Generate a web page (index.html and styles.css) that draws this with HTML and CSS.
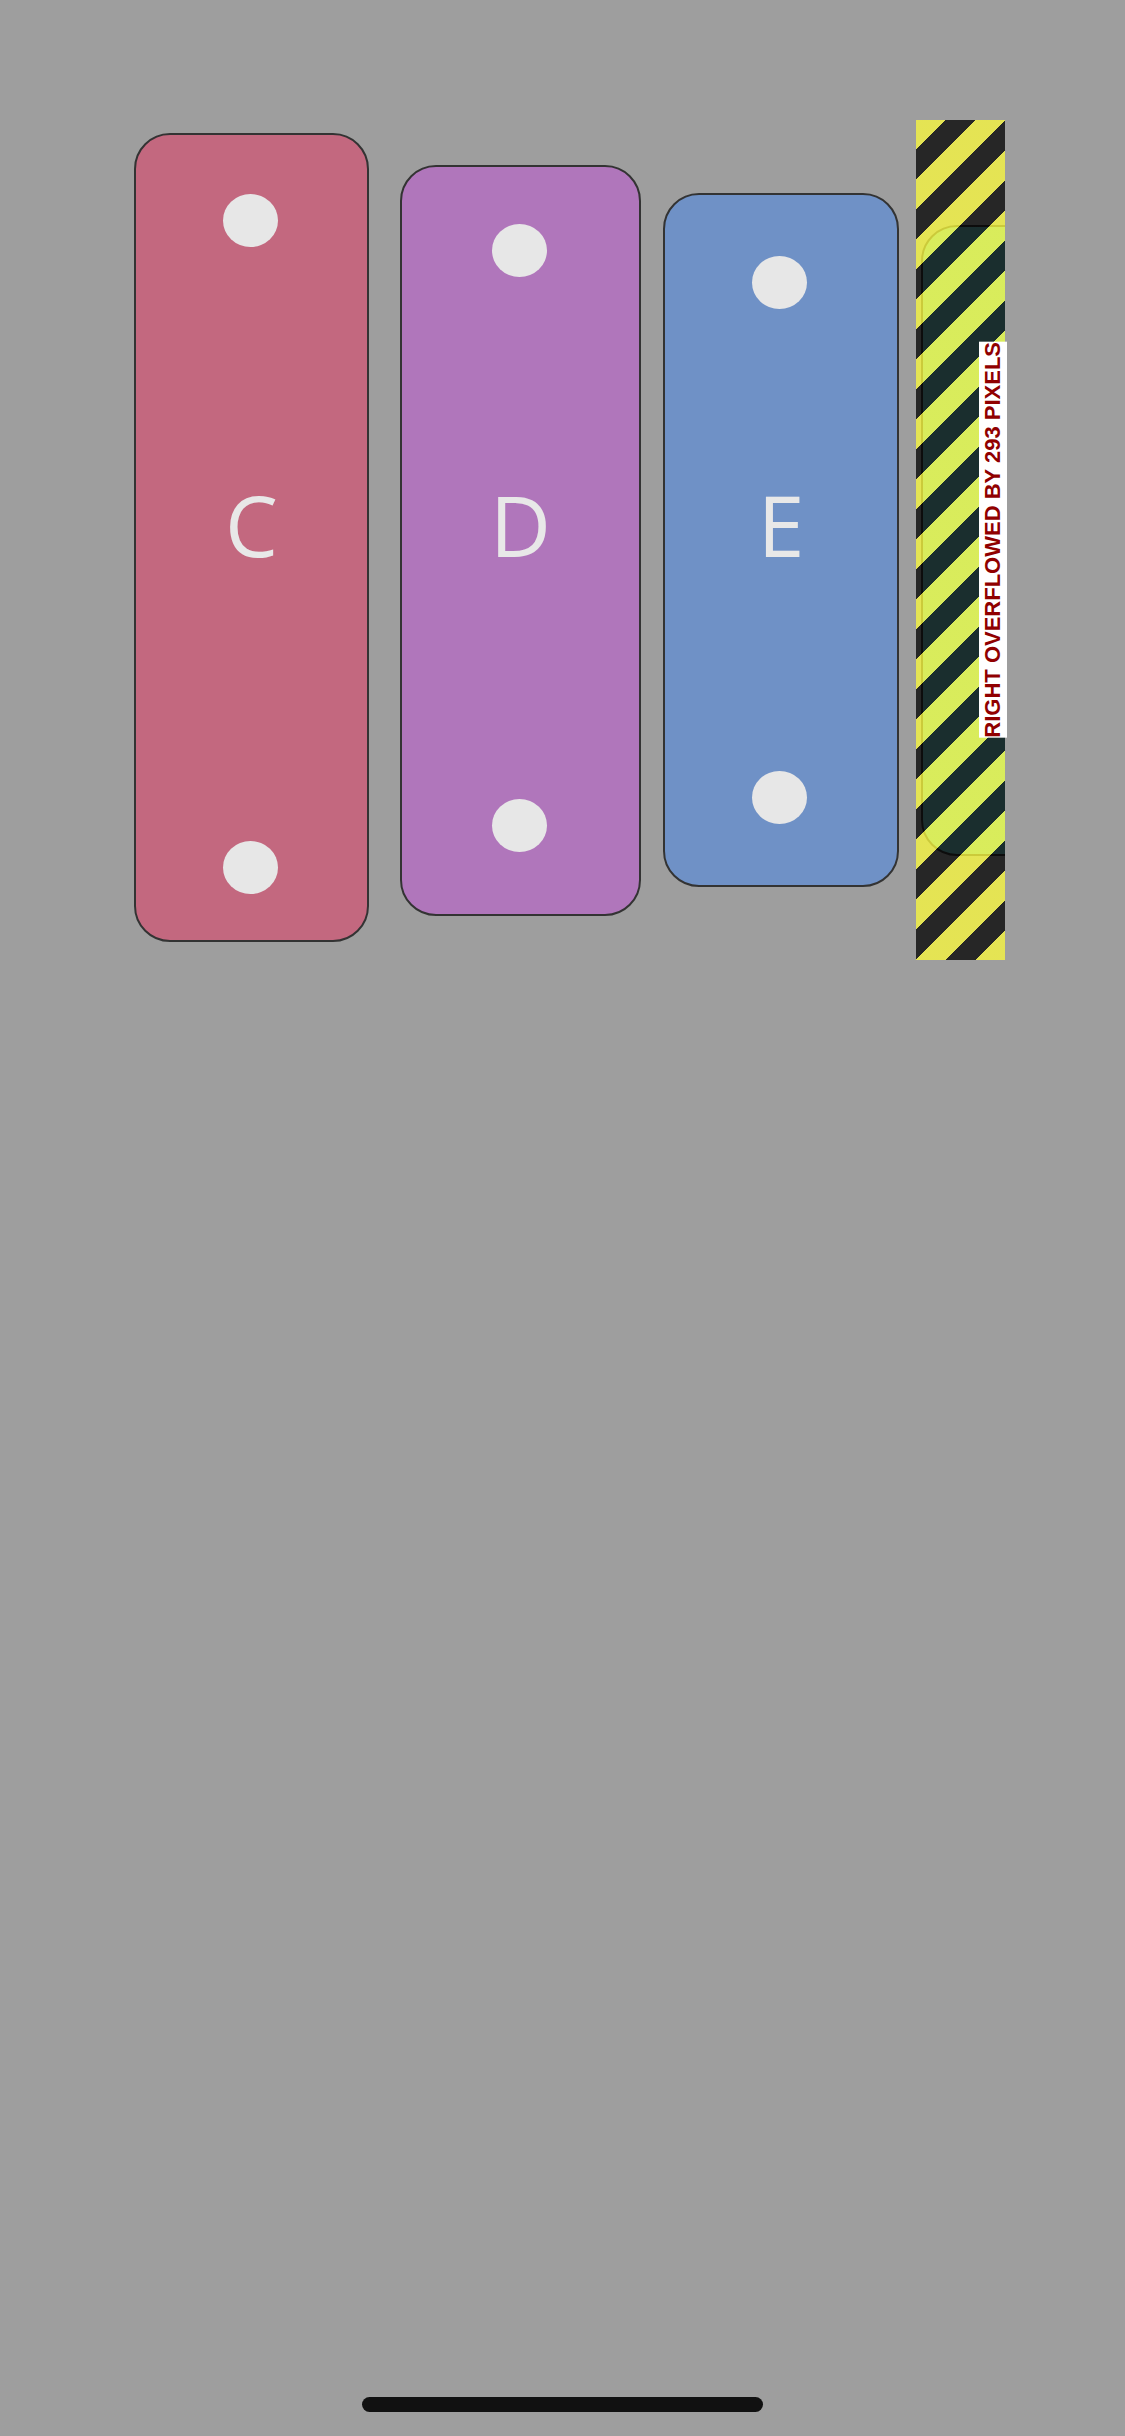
FILE: index.html
```html
<!DOCTYPE html>
<html lang="en">
<head>
<meta charset="utf-8">
<title>Xylophone</title>
<link rel="stylesheet" href="styles.css">
</head>
<body>
<div class="screen">
  <div class="stage">
    <div class="row">
      <div class="bar bar-c">
        <span class="dot"></span>
        <span class="note">C</span>
        <span class="dot"></span>
      </div>
      <div class="bar bar-d">
        <span class="dot"></span>
        <span class="note">D</span>
        <span class="dot"></span>
      </div>
      <div class="bar bar-e">
        <span class="dot"></span>
        <span class="note">E</span>
        <span class="dot"></span>
      </div>
      <div class="bar bar-f">
        <span class="dot"></span>
        <span class="note"></span>
        <span class="dot"></span>
      </div>
    </div>
    <div class="overflow">
      <span class="overflow-label">RIGHT OVERFLOWED BY 293 PIXELS</span>
    </div>
  </div>
  <div class="home-indicator"></div>
</div>
</body>
</html>
```
FILE: styles.css
```css
html, body {
  margin: 0;
  padding: 0;
  background: #9e9e9e;
}

.screen {
  position: relative;
  width: 1125px;
  height: 2436px;
  overflow: hidden;
  background: #9e9e9e;
  padding-top: 120px;
  box-sizing: border-box;
}

.stage {
  position: relative;
  margin-left: 134px;
  width: 871px;
  height: 840px;
}

.row {
  display: flex;
  align-items: center;
  height: 100%;
  overflow: hidden;
}

.bar {
  flex-shrink: 0;
  box-sizing: border-box;
  border: 2px solid #333;
  border-radius: 36px;
  display: flex;
  flex-direction: column;
  align-items: center;
}

.bar-c {
  width: 235px;
  height: 809px;
  margin-bottom: 5px;
  background: #c3687f;
  padding: 59px 0 46px;
  --shift: 40px;
}

.bar-d {
  width: 241px;
  height: 751px;
  margin-left: 31px;
  background: #b076bb;
  padding: 57px 0 62px;
  --shift: 27px;
}

.bar-e {
  width: 236px;
  height: 694px;
  margin-left: 22px;
  background: #6f91c6;
  padding: 61px 0 61px;
  --shift: 32px;
}

.bar-f {
  width: 236px;
  height: 631px;
  margin-left: 22px;
  background: #6cbfc0;
  padding: 58px 0 58px;
  --shift: 30px;
}

.dot {
  display: block;
  width: 55px;
  height: 53px;
  border-radius: 50%;
  background: #e7e7e7;
  margin-right: 3px;
}

.note {
  flex: 1;
  display: flex;
  align-items: center;
  justify-content: center;
  padding-bottom: var(--shift);
  font-family: "Open Sans", "Noto Sans", sans-serif;
  font-size: 84px;
  color: #e8e8e8;
}

.overflow {
  position: absolute;
  top: 0;
  right: 0;
  bottom: 0;
  width: 89px;
  display: flex;
  align-items: center;
  justify-content: flex-end;
  background: repeating-linear-gradient(
    135deg,
    rgba(251, 250, 60, 0.76) 0,
    rgba(251, 250, 60, 0.76) 21.2px,
    rgba(0, 0, 0, 0.76) 21.2px,
    rgba(0, 0, 0, 0.76) 42.4px
  );
}

.overflow-label {
  margin-right: -2px;
  writing-mode: vertical-rl;
  transform: rotate(180deg);
  background: #ffffff;
  color: #900000;
  font-family: "Liberation Sans", Arial, sans-serif;
  font-weight: bold;
  font-size: 22px;
  line-height: 28px;
  white-space: nowrap;
}

.home-indicator {
  position: absolute;
  left: 362px;
  bottom: 24px;
  width: 401px;
  height: 15px;
  border-radius: 8px;
  background: #111111;
}
```
